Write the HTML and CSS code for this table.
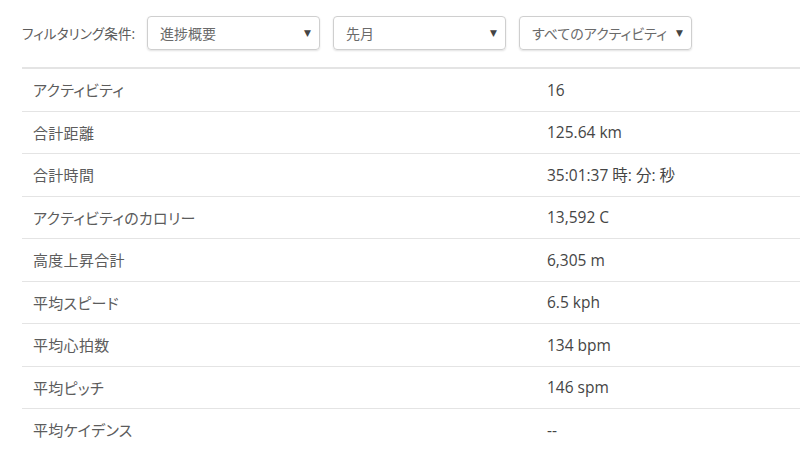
FILE: index.html
```html
<!DOCTYPE html>
<html lang="ja">
<head>
<meta charset="utf-8">
<link rel="stylesheet" href="styles.css">
</head>
<body>
<div class="filters">
  <span class="filter-label">フィルタリング条件:</span>
  <div class="select"><span>進捗概要</span><span class="arrow">▼</span></div>
  <div class="select"><span>先月</span><span class="arrow">▼</span></div>
  <div class="select"><span>すべてのアクティビティ</span><span class="arrow">▼</span></div>
</div>
<table class="stats">
  <tr><td class="k">アクティビティ</td><td class="v">16</td></tr>
  <tr><td class="k">合計距離</td><td class="v">125.64 km</td></tr>
  <tr><td class="k">合計時間</td><td class="v">35:01:37 時: 分: 秒</td></tr>
  <tr><td class="k">アクティビティのカロリー</td><td class="v">13,592 C</td></tr>
  <tr><td class="k">高度上昇合計</td><td class="v">6,305 m</td></tr>
  <tr><td class="k">平均スピード</td><td class="v">6.5 kph</td></tr>
  <tr><td class="k">平均心拍数</td><td class="v">134 bpm</td></tr>
  <tr><td class="k">平均ピッチ</td><td class="v">146 spm</td></tr>
  <tr><td class="k">平均ケイデンス</td><td class="v">--</td></tr>
</table>
</body>
</html>
```
FILE: styles.css
```css
html, body {
  margin: 0;
  padding: 0;
  background: #fff;
  overflow: hidden;
}
body {
  font-family: "Open Sans", "Noto Sans CJK JP", sans-serif;
  font-feature-settings: "palt";
  color: #555;
}
.filters {
  display: flex;
  align-items: center;
  padding: 16px 0 0 22px;
}
.filter-label {
  font-size: 13.7px;
  color: #5c5c5c;
  width: 125px;
}
.select {
  box-sizing: border-box;
  width: 173px;
  height: 34px;
  margin-right: 13px;
  border: 1px solid #cfcfcf;
  border-radius: 4px;
  box-shadow: 0 1px 2px rgba(0,0,0,0.12);
  display: flex;
  align-items: center;
  justify-content: space-between;
  padding: 0 8px 0 12px;
  font-size: 14px;
  color: #6a6a6a;
}
.select .arrow {
  font-size: 9px;
  color: #444;
  font-family: "DejaVu Sans", sans-serif;
}
.stats {
  margin: 17px 0 0 22px;
  width: 800px;
  border-collapse: collapse;
  border-top: 2px solid #e4e4e4;
}
.stats td {
  border-bottom: 1px solid #e4e4e4;
  height: 41.5px;
  padding: 0 11px;
  vertical-align: middle;
}
.stats tr:last-child td {
  border-bottom: none;
}
.stats .k {
  width: 492px;
  font-size: 15px;
  letter-spacing: 0.3px;
  color: #5c5c5c;
}
.stats .v {
  font-size: 15.5px;
  color: #454545;
}
```
